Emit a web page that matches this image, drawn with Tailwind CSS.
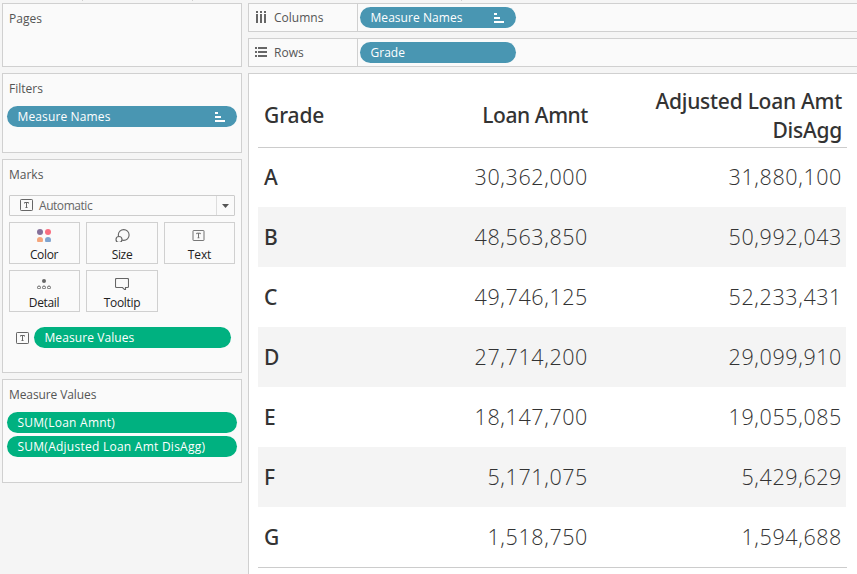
<!DOCTYPE html>
<html lang="en">
<head>
<meta charset="utf-8">
<title>Loan amounts by grade</title>
<script src="https://cdn.jsdelivr.net/npm/@tailwindcss/browser@4"></script>
</head>
<body class="w-[857px] h-[574px] overflow-hidden bg-[#f5f5f5] font-['Open_Sans','Noto_Sans',sans-serif] text-[12px] leading-[16px] text-[#555]">
<svg width="0" height="0" class="absolute">
  <symbol id="sort" viewBox="0 0 10 10"><path d="M0 0h3v2H0zM0 4h6v2H0zM0 8h10v2H0z" fill="#fff"/></symbol>
  <symbol id="text" viewBox="0 0 13 12"><rect x=".5" y=".5" width="12" height="11" rx=".7" fill="none" stroke="#666"/><path d="M4.500 4.500v-1h4v1M6.500 3.500v5M5.500 8.500h2" fill="none" stroke="#666"/></symbol>
</svg>
<svg width="857" height="1" class="absolute left-0 top-0"><path d="M82 0h1v1h-1zM192 0h1v1h-1zM461 0h1v1h-1z" fill="#d0d0d0"/></svg>
<div class="flex h-full gap-[6px] pl-[2px] pt-[3px]">
  <aside class="flex w-[240px] shrink-0 flex-col gap-[6px]">
    <section class="h-[64px] border border-[#d0d0d0] bg-[#fafafa] pl-[6px] pt-[7px]"><h2>Pages</h2></section>
    <section class="h-[80px] border border-[#d0d0d0] bg-[#fafafa] px-[4px] pt-[7px]">
      <h2 class="pl-[2px]">Filters</h2>
      <div class="mt-[9px] flex h-[21px] items-center justify-between rounded-full bg-[#4996b2] pl-[10.500px] pr-[12px] font-medium tracking-[0.130px] text-white"><span>Measure Names</span><svg class="h-[10px] w-[10px]"><use href="#sort"/></svg></div>
    </section>
    <section class="h-[214px] border border-[#d0d0d0] bg-[#fafafa] pl-[6px] pt-[7px]">
      <h2>Marks</h2>
      <div class="mt-[12px] flex h-[21px] w-[226px] items-center rounded-[1px] border border-[#ccc] pl-[10px]">
        <svg class="-mt-px h-[12px] w-[13px]"><use href="#text"/></svg><span class="ml-[6px] flex-1 tracking-[-0.450px] text-[#666]">Automatic</span>
        <span class="flex h-full w-[18px] items-center justify-center border-l border-[#ddd]"><svg width="7" height="4"><path d="M0 0h7L3.500 4z" fill="#555"/></svg></span>
      </div>
      <div class="mt-[6px] grid w-[226px] grid-cols-[71px_72px_71px] gap-[6px] text-center tracking-[-0.350px] text-[#222]">
        <button class="flex h-[42px] flex-col items-center border border-[#d0d0d0] pr-px pt-[6px]"><svg width="14" height="14"><circle cx="3" cy="3" r="3" fill="#85709a"/><circle cx="11" cy="3" r="3" fill="#f96e80"/><circle cx="3" cy="11" r="3" fill="#f5a57b"/><circle cx="11" cy="11" r="3" fill="#80a4cf"/></svg><span class="mt-[5px]">Color</span></button>
        <button class="flex h-[42px] flex-col items-center border border-[#d0d0d0] pt-[6px]"><svg width="15" height="14" fill="#fafafa" stroke="#666" stroke-width="1.100"><circle cx="8.700" cy="6" r="5.400"/><circle cx="4" cy="10.500" r="3"/></svg><span class="mt-[5px]">Size</span></button>
        <button class="flex h-[42px] flex-col items-center border border-[#d0d0d0] pr-[2px] pt-[7px]"><svg class="h-[12px] w-[13px]"><use href="#text"/></svg><span class="mt-[6px] pl-[2px] tracking-[-0.100px]">Text</span></button>
        <button class="flex h-[42px] flex-col items-center border border-[#d0d0d0] pr-px pt-[8px]"><svg width="14" height="11" fill="none" stroke="#666"><circle cx="7" cy="2" r="2" fill="#666" stroke="none"/><circle cx="2" cy="8.500" r="1.500"/><circle cx="7" cy="8.500" r="1.500"/><circle cx="12" cy="8.500" r="1.500"/></svg><span class="mt-[6px]">Detail</span></button>
        <button class="flex h-[42px] flex-col items-center border border-[#d0d0d0] pt-[7px]"><svg width="14" height="13" fill="none" stroke="#666" stroke-width="1.100"><path d="M1.500.5h11q1 0 1 1v7q0 1-1 1h-2v3l-3-3h-6q-1 0-1-1v-7q0-1 1-1z"/></svg><span class="mt-[5px]">Tooltip</span></button>
      </div>
      <div class="mt-[15px] flex items-center gap-[5px] pl-[7px]"><svg class="h-[12px] w-[13px]"><use href="#text"/></svg><div class="flex h-[21px] w-[197px] items-center rounded-full bg-[#00b180] pl-[10.500px] font-medium tracking-[0.080px] text-white"><span>Measure Values</span></div></div>
    </section>
    <section class="h-[104px] border border-[#d0d0d0] bg-[#fafafa] px-[4px] pt-[7px]">
      <h2 class="pl-[2px] tracking-[-0.100px]">Measure Values</h2>
      <div class="mt-[9px] flex h-[21px] items-center rounded-full bg-[#00b180] pl-[10.500px] font-medium tracking-[0.250px] text-white"><span>SUM(Loan Amnt)</span></div>
      <div class="mt-[3px] flex h-[21px] items-center rounded-full bg-[#00b180] pl-[10.500px] font-medium tracking-[0.250px] text-white"><span>SUM(Adjusted Loan Amt DisAgg)</span></div>
    </section>
  </aside>
  <main class="flex flex-1 flex-col gap-[6px]">
    <div class="flex h-[29px] shrink-0 border border-r-0 border-[#d0d0d0] bg-[#fafafa]">
      <div class="flex w-[109px] items-center border-r border-[#d0d0d0] pl-[7px]"><svg width="10" height="12" class="-mt-px" fill="#666"><path d="M0 0h2v2H0zM4 0h2v2H4zM8 0h2v2H8zM0 3h2v9H0zM4 3h2v9H4zM8 3h2v9H8z"/></svg><span class="ml-[8px]">Columns</span></div>
      <div class="ml-[2px] mt-[3px] flex h-[21px] w-[156px] items-center justify-between rounded-full bg-[#4996b2] pl-[10.500px] pr-[12px] font-medium tracking-[0.050px] text-white"><span>Measure Names</span><svg class="h-[10px] w-[10px]"><use href="#sort"/></svg></div>
    </div>
    <div class="flex h-[29px] shrink-0 border border-r-0 border-[#d0d0d0] bg-[#fafafa]">
      <div class="flex w-[109px] items-center border-r border-[#d0d0d0] pl-[6px]"><svg width="12" height="10" class="-mt-px" fill="#666"><path d="M0 0h2v2H0zM3 0h9v2H3zM0 4h2v2H0zM3 4h9v2H3zM0 8h2v2H0zM3 8h9v2H3z"/></svg><span class="ml-[7px]">Rows</span></div>
      <div class="ml-[2px] mt-[3px] flex h-[21px] w-[156px] items-center rounded-full bg-[#4996b2] pl-[10.500px] font-medium text-white"><span>Grade</span></div>
    </div>
    <div class="flex-1 border-l border-t border-[#d0d0d0] bg-white pl-[9px] text-[21px] text-[#333]">
      <div class="w-[589px] border-b border-[#ccc]">
        <div class="grid h-[74px] grid-cols-[200px_124px_254px] items-center border-b border-[#ccc] pl-[6px] pt-[11px] font-['Noto_Sans',sans-serif] font-medium leading-[29px]"><span class="pb-[2px] tracking-[-0.100px]">Grade</span><span class="pb-[2px] text-right tracking-[-0.420px]">Loan Amnt</span><span class="pl-[60px] text-right tracking-[-0.250px]">Adjusted Loan Amt DisAgg</span></div>
        <div id="rows" class="-mt-px h-[420px] w-[588px]"></div>
      </div>
    </div>
  </main>
</div>
<script>
const data = [
  ["A","30,362,000","31,880,100"],["B","48,563,850","50,992,043"],["C","49,746,125","52,233,431"],
  ["D","27,714,200","29,099,910"],["E","18,147,700","19,055,085"],["F","5,171,075","5,429,629"],["G","1,518,750","1,594,688"]
];
document.getElementById("rows").innerHTML = data.map(([g,a,b]) =>
  `<div class="grid h-[60px] grid-cols-[200px_124px_254px] items-center pl-[6px] leading-[28px] even:bg-[#f4f4f4]"><span class="font-['Noto_Sans',sans-serif] font-medium">${g}</span><span class="text-right text-[21.500px] font-light tracking-[0.600px]">${a}</span><span class="text-right text-[21.500px] font-light tracking-[0.600px]">${b}</span></div>`).join("");
</script>
</body>
</html>
